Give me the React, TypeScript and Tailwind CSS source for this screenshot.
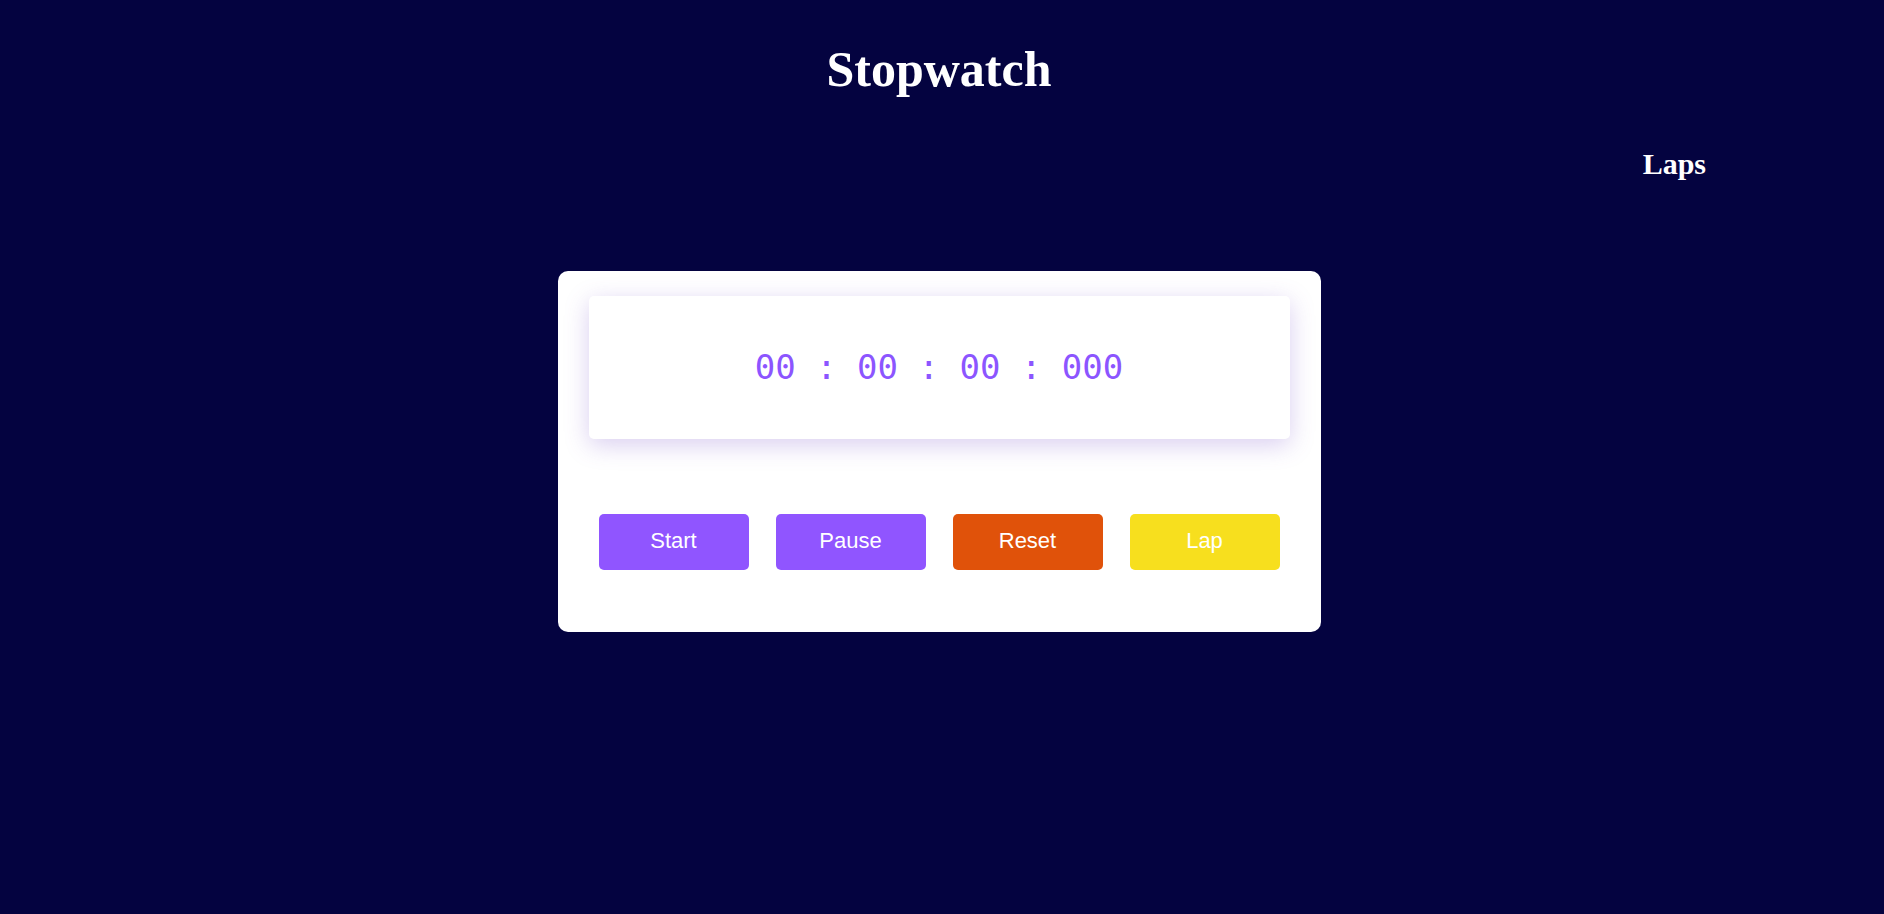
import { useState } from "react";

const pad = (n: number, len = 2) => n.toString().padStart(len, "0");

export default function App() {
  const [ms] = useState(0);

  const hours = Math.floor(ms / 3600000);
  const minutes = Math.floor((ms % 3600000) / 60000);
  const seconds = Math.floor((ms % 60000) / 1000);
  const millis = ms % 1000;

  return (
    <div className="min-h-screen w-full bg-[#040340] font-['Liberation_Serif',serif] text-white">
      {/* Title */}
      <h1 className="pt-[39px] pr-[6px] text-center text-[50px] font-bold leading-[60px]">
        Stopwatch
      </h1>

      {/* Laps heading */}
      <div className="mt-[47px] flex justify-end pr-[178px]">
        <h2 className="text-[30px] font-bold leading-[36px]">Laps</h2>
      </div>

      {/* Stopwatch card */}
      <div className="mt-[89px] flex justify-center pr-[6px]">
        <div className="w-[763px] h-[361px] rounded-[10px] bg-white px-[31px] pt-[25px]">
          <div className="flex h-[143px] items-center justify-center rounded-[5px] bg-white shadow-[0_6px_24px_rgba(120,80,200,0.28)]">
            <span className="font-['DejaVu_Sans_Mono',monospace] text-[34px] text-[#8c55ff]">
              {pad(hours)} : {pad(minutes)} : {pad(seconds)} : {pad(millis, 3)}
            </span>
          </div>

          <div className="mt-[75px] flex justify-center gap-[27px] font-['Liberation_Sans',Arial,sans-serif] text-[22px]">
            <button className="h-[56px] w-[150px] rounded-[5px] bg-[#9055ff] pb-[3px] text-white">
              Start
            </button>
            <button className="h-[56px] w-[150px] rounded-[5px] bg-[#9055ff] pb-[3px] text-white">
              Pause
            </button>
            <button className="h-[56px] w-[150px] rounded-[5px] bg-[#e0520a] pb-[3px] text-white">
              Reset
            </button>
            <button className="h-[56px] w-[150px] rounded-[5px] bg-[#f7df1e] pb-[3px] text-white">
              Lap
            </button>
          </div>
        </div>
      </div>
    </div>
  );
}
